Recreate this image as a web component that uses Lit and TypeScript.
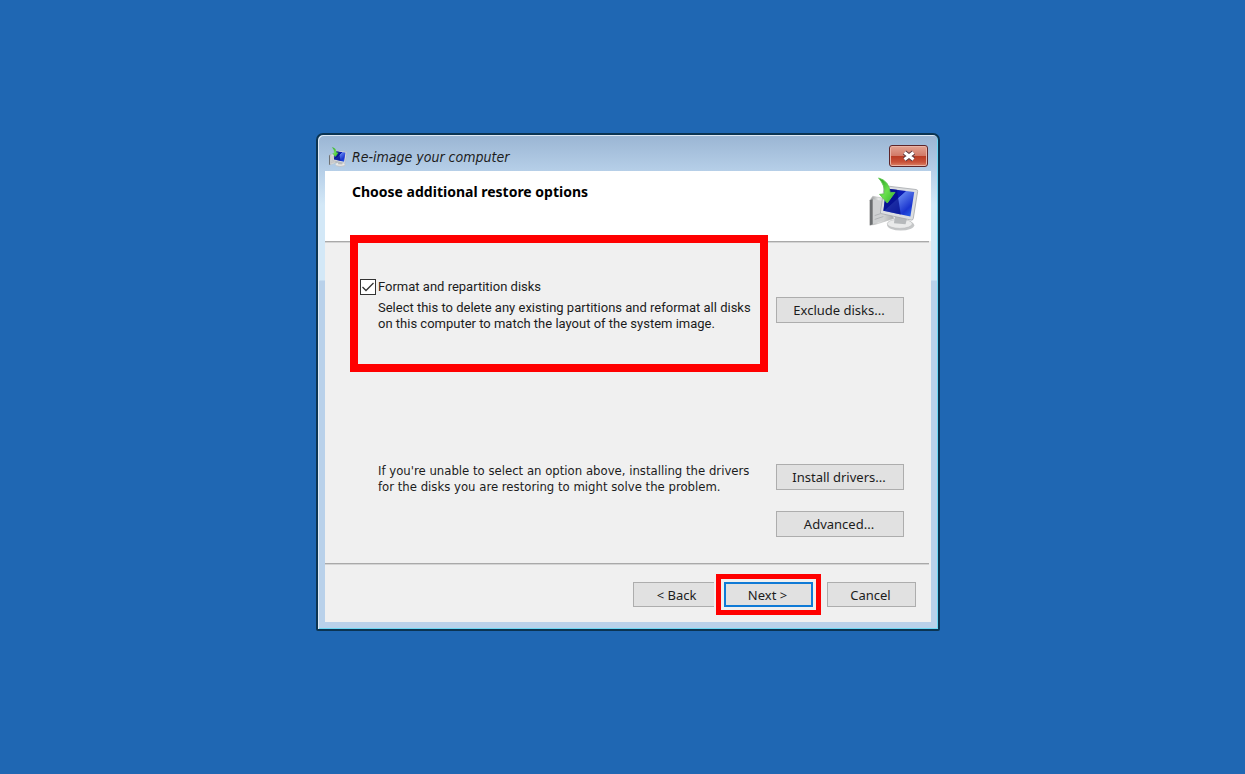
import { LitElement, html, css, svg } from "lit";
import { customElement, state } from "lit/decorators.js";

const computerArt = svg`
  <defs>
    <linearGradient id="screen" x1="0" y1="0" x2="1" y2="1">
      <stop offset="0" stop-color="#0a1a9c" />
      <stop offset="0.4" stop-color="#0c1cb4" />
      <stop offset="0.42" stop-color="#5b7cec" />
      <stop offset="0.75" stop-color="#1a35cf" />
      <stop offset="1" stop-color="#2b6ef0" />
    </linearGradient>
    <linearGradient id="tower" x1="0" y1="0" x2="1" y2="0">
      <stop offset="0" stop-color="#8d8f90" />
      <stop offset="0.35" stop-color="#e4e5e5" />
      <stop offset="1" stop-color="#a9abac" />
    </linearGradient>
    <linearGradient id="leaf" x1="0" y1="0" x2="1" y2="1">
      <stop offset="0" stop-color="#1f9a1c" />
      <stop offset="0.5" stop-color="#6be04e" />
      <stop offset="1" stop-color="#2fb427" />
    </linearGradient>
  </defs>
  <path d="M3 24 6 20 17 22 28 43 9 49 3 50Z" fill="url(#tower)" stroke="#b9bbbc" stroke-width="0.6" />
  <path d="M3 24 6 23 6 49 3 50Z" fill="#6b6e70" />
  <path d="M6 23 17 25 17 45 9 48 6 49Z" fill="#cfd1d2" />
  <path d="M8 40 17 37M8 44 17 41" stroke="#b0b3b5" />
  <ellipse cx="35" cy="50" rx="14" ry="5.4" fill="#c5c7c8" />
  <ellipse cx="34" cy="48.500" rx="13" ry="4.800" fill="#e9eaea" stroke="#b5b7b8" stroke-width="0.6" />
  <path d="M29 39 42 41 40 49 28 48Z" fill="#b6b9bb" />
  <path d="M18 9 51 13Q53 13.500 52.500 15L48 43Q47.500 45 46 44.700L15 38Q13.500 37.500 14 36Z" fill="#dcdee0" stroke="#a4a7aa" stroke-width="0.8" />
  <path d="M20 12 49 15.500 45 41 17 35Z" fill="url(#screen)" />
  <path d="M20 12 31 13.300 35 38.800 17 35Z" fill="#06108a" opacity="0.75" />
  <path d="M12 1Q23 4 24 16L29 16 21 27 13 18 18 17.500Q19 9 12 1Z" fill="url(#leaf)" stroke="#5cc94a" stroke-width="0.9" />
`;

@customElement("computer-icon")
class ComputerIcon extends LitElement {
  static styles = css`
    :host { display: block; }
    svg { display: block; width: 100%; height: 100%; }
  `;
  render() {
    return html`<svg viewBox="0 0 56 56" aria-hidden="true">${computerArt}</svg>`;
  }
}

@customElement("app-root")
class AppRoot extends LitElement {
  @state() private formatDisks = true;

  static styles = css`
    :host {
      display: flex;
      align-items: center;
      justify-content: center;
      box-sizing: border-box;
      min-height: 100vh;
      padding: 0 0 10px 11px;
      background: #1f67b3;
      color: #1c1c1c;
      font: 13px/16px "DejaVu Sans Condensed", "Noto Sans", sans-serif;
    }
    * { box-sizing: border-box; }
    .dialog {
      width: 100%;
      max-width: 624px;
      padding: 0 7px 7px;
      border: 2px solid #0b3452;
      border-radius: 7px 7px 2px 2px;
      background:
        linear-gradient(#9ab5d3, #b6cfe8 36px, #d3e8f7 70px, #d3e8f7 145px, #b9d1ea 146px);
      box-shadow: inset 1px 1px #dfeaf5, inset -1px -1px #6cd8f4;
    }
    .titlebar {
      display: flex;
      align-items: center;
      gap: 4px;
      height: 36px;
      padding: 8px 3px 0;
    }
    .titlebar computer-icon { width: 20px; height: 20px; }
    .title {
      flex: 1;
      margin: 0;
      font: italic 14px/20px "DejaVu Sans Condensed", "Noto Sans", sans-serif;
    }
    .close {
      display: grid;
      place-items: center;
      width: 39px;
      height: 22px;
      padding: 0;
      margin-bottom: 2px;
      border: 1px solid #5e2529;
      border-radius: 3px;
      background: linear-gradient(#e3a392, #d27a68 48%, #b93a22 50%, #c9523a 80%, #dd8468);
      box-shadow: inset 0 0 0 1px #eab4a6;
    }
    .close svg { width: 16px; height: 12px; }
    .banner {
      display: flex;
      justify-content: space-between;
      height: 70px;
      padding: 5px 10px 0 27px;
      background: #fff;
    }
    .banner h2 {
      margin: 6px 0 0;
      color: #000;
      font: bold 14px/20px "Noto Sans", sans-serif;
    }
    .banner computer-icon { width: 54px; height: 56px; }
    .rule {
      height: 2px;
      margin: 0;
      border: 0;
      border-right: 2px solid #f0f0f0;
      background: linear-gradient(#a9a9a9 50%, #d4d4d4 50%);
    }
    .body {
      display: grid;
      grid-template-columns: 402px 128px;
      justify-content: space-between;
      padding: 0 27px 26px 33px;
      background: #f0f0f0;
    }
    .option {
      padding: 35px 2px 32px;
      outline: 8px solid #f00;
      font-family: Roboto, "Noto Sans", sans-serif;
    }
    .check {
      display: flex;
      align-items: center;
      gap: 2px;
      width: max-content;
      line-height: 18px;
    }
    .check input {
      appearance: none;
      width: 16px;
      height: 16px;
      margin: 0;
      border: 1px solid #333;
      background: #fff;
    }
    .check input:checked {
      background: #fff url("data:image/svg+xml,%3Csvg xmlns='http://www.w3.org/2000/svg' viewBox='0 0 14 14'%3E%3Cpath d='M1.500 7l3.500 3.500L12.500 3' fill='none' stroke='%23333' stroke-width='1.300'/%3E%3C/svg%3E");
    }
    p { margin: 0; }
    .option p { margin: 4px 0 0 18px; white-space: nowrap; }
    .exclude { margin-top: 54px; }
    .hint { margin-top: 99px; padding-left: 20px; white-space: nowrap; }
    .extras { display: grid; gap: 21px; margin-top: 100px; }
    .btn {
      width: 89px;
      height: 25px;
      padding: 0 2px 0 0;
      border: 1px solid #adadad;
      background: #e1e1e1;
      color: #1c1c1c;
      font: 13px/16px "Noto Sans", sans-serif;
    }
    .wide { width: 128px; height: 26px; }
    .footer {
      display: flex;
      justify-content: flex-end;
      padding: 17px 15px 15px;
      background: #f0f0f0;
    }
    .next {
      margin: 0 14px 0 2px;
      border: 2px solid #0f7ad6;
      outline: 5px solid #f00;
      outline-offset: 3px;
      box-shadow: 0 0 0 10px #f0f0f0;
    }
  `;

  render() {
    return html`
      <main class="dialog" role="dialog" aria-labelledby="title">
        <header class="titlebar">
          <computer-icon></computer-icon>
          <h1 class="title" id="title">Re-image your computer</h1>
          <button class="close" aria-label="Close">
            <svg viewBox="0 0 16 12" aria-hidden="true">
              <path d="M3.500 2.500 12.500 9.500M12.500 2.500 3.500 9.500" stroke="#5b3a40" stroke-width="5" />
              <path d="M3.500 2.500 12.500 9.500M12.500 2.500 3.500 9.500" stroke="#fff" stroke-width="3" />
            </svg>
          </button>
        </header>
        <div class="banner">
          <h2>Choose additional restore options</h2>
          <computer-icon></computer-icon>
        </div>
        <hr class="rule" />
        <section class="body">
          <div class="option">
            <label class="check">
              <input
                type="checkbox"
                aria-describedby="format-note"
                .checked=${this.formatDisks}
                @change=${(e: Event) => (this.formatDisks = (e.target as HTMLInputElement).checked)}
              />
              Format and repartition disks
            </label>
            <p id="format-note">
              Select this to delete any existing partitions and reformat all disks<br />
              on this computer to match the layout of the system image.
            </p>
          </div>
          <button class="btn wide exclude">Exclude disks...</button>
          <p class="hint">
            If you're unable to select an option above, installing the drivers<br />
            for the disks you are restoring to might solve the problem.
          </p>
          <div class="extras">
            <button class="btn wide">Install drivers...</button>
            <button class="btn wide">Advanced...</button>
          </div>
        </section>
        <hr class="rule" />
        <footer class="footer">
          <button class="btn">&lt; Back</button>
          <button class="btn next">Next &gt;</button>
          <button class="btn">Cancel</button>
        </footer>
      </main>
    `;
  }
}
